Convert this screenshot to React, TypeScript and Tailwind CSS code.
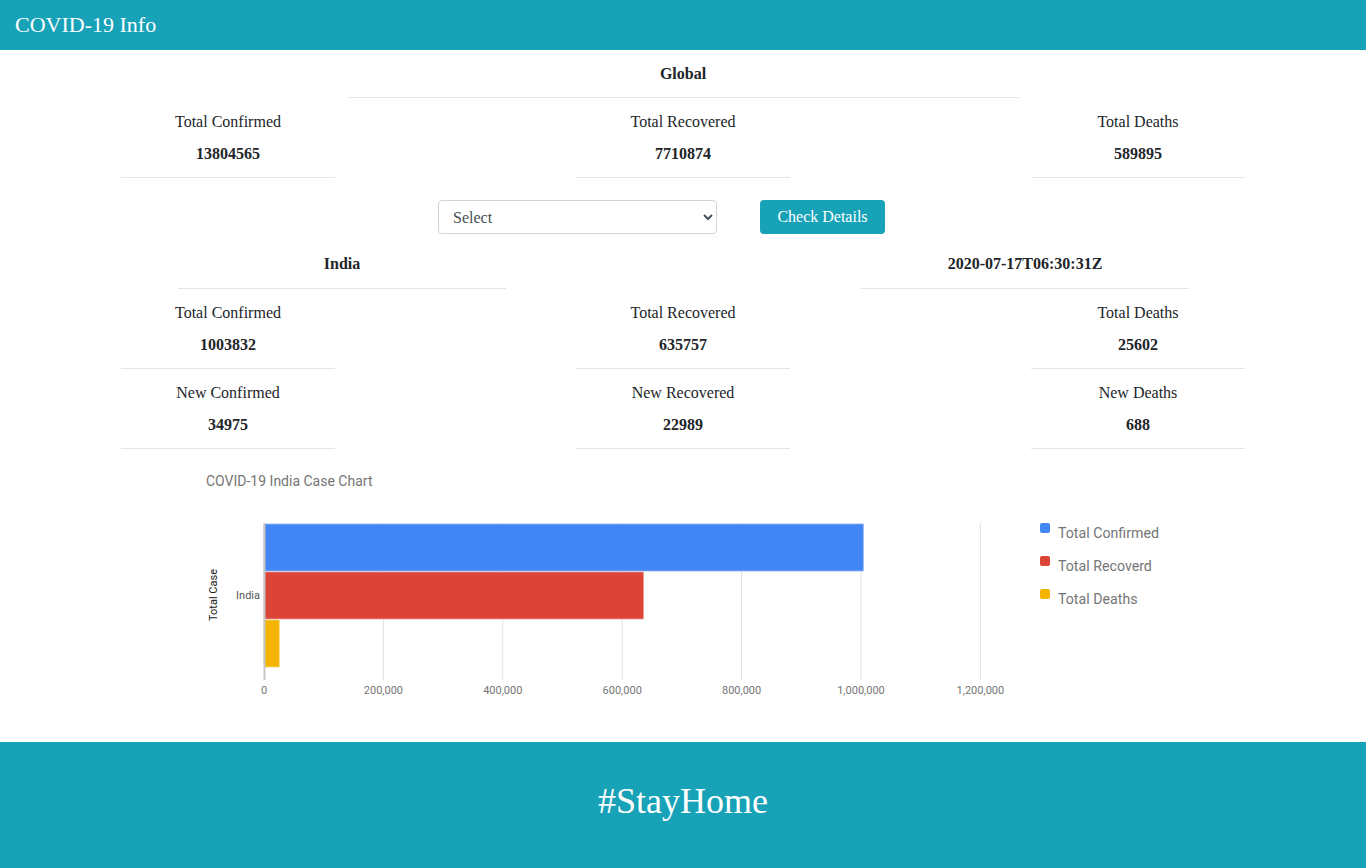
import React from 'react';

const serif = { fontFamily: '"Liberation Serif", "DejaVu Serif", serif' };

function Stat({ label, value }: { label: string; value: string }) {
  return (
    <div className="w-[214px] border-b border-[#e6e6e6] pt-[12px] pb-[11px] text-center">
      <p className="text-[16px] leading-6">{label}</p>
      <p className="mt-2 text-[16px] leading-6 font-bold">{value}</p>
    </div>
  );
}

function Chart() {
  const grid = [143, 262.4, 381.8, 501.2, 620.6, 740, 859.4];
  const labels = ['0', '200,000', '400,000', '600,000', '800,000', '1,000,000', '1,200,000'];
  const legend = [
    { name: 'Total Confirmed', color: '#4285f4', y: 63 },
    { name: 'Total Recoverd', color: '#db4437', y: 96 },
    { name: 'Total Deaths', color: '#f4b400', y: 129 },
  ];
  return (
    <svg width="1124" height="260" className="block" style={{ fontFamily: 'Roboto, Arial, sans-serif' }}>
      <text x="85" y="26" fontSize="14" fill="#757575">COVID-19 India Case Chart</text>
      {grid.slice(1).map(x => (
        <line key={x} x1={x} x2={x} y1="63" y2="220" stroke="#e0e0e0" strokeWidth="1" />
      ))}
      <rect x="143" y="64" width="599.3" height="47" fill="#4285f4" stroke="#8eb4f8" strokeWidth="0.8" />
      <rect x="143" y="112" width="379.5" height="47" fill="#db4437" stroke="#ec9e98" strokeWidth="0.8" />
      <rect x="143" y="160" width="15.3" height="47" fill="#f4b400" stroke="#f9d77d" strokeWidth="0.8" />
      <line x1="143.5" x2="143.5" y1="63" y2="220" stroke="#c6c6c6" strokeWidth="2" />
      {grid.map((x, i) => (
        <text key={i} x={x} y="234" fontSize="11" fill="#757575" textAnchor="middle">{labels[i]}</text>
      ))}
      <text x="139" y="139" fontSize="11" fill="#555" textAnchor="end">India</text>
      <text x="0" y="0" fontSize="11" fill="#222" textAnchor="middle" transform="translate(96 135) rotate(-90)">Total Case</text>
      {legend.map(l => (
        <g key={l.name}>
          <rect x="919" y={l.y} width="10" height="10" rx="2" fill={l.color} />
          <text x="937" y={l.y + 15} fontSize="14.2" fill="#757575">{l.name}</text>
        </g>
      ))}
    </svg>
  );
}

export default function App() {
  return (
    <div className="min-h-[868px] bg-white text-[#212529]" style={serif}>
      <div className="h-[50px] bg-[#17a2b8] px-[15px] pb-[2px] flex items-center">
        <span className="text-white text-[22px]">COVID-19 Info</span>
      </div>

      <div className="w-[1124px] ml-[121px]">
        {/* global */}
        <div className="flex justify-center">
          <div className="w-[671px] border-b border-[#e6e6e6] pt-[12px] pb-[11px] text-center">
            <p className="text-[16px] leading-6 font-bold">Global</p>
          </div>
        </div>
        <div className="flex justify-between">
          <Stat label="Total Confirmed" value="13804565" />
          <Stat label="Total Recovered" value="7710874" />
          <Stat label="Total Deaths" value="589895" />
        </div>

        <div className="flex items-center mt-[22px] ml-[317px] gap-[43px]">
          <select className="w-[279px] h-[34px] border border-[#ced4da] rounded-[4px] bg-white pl-[10px] pr-2 text-[16px] text-[#495057]" style={serif} defaultValue="">
            <option value="">Select</option>
            <option value="IN">India</option>
          </select>
          <button className="w-[125px] h-[34px] rounded-[4px] bg-[#17a2b8] text-white text-[16px]" style={serif}>
            Check Details
          </button>
        </div>

        {/* country */}
        <div className="flex mt-[17px]">
          <div className="w-[328px] ml-[57px] border-b border-[#e6e6e6] pt-[1px] pb-[12px] text-center">
            <p className="text-[16px] leading-6 font-bold">India</p>
          </div>
          <div className="w-[328px] ml-[355px] border-b border-[#e6e6e6] pt-[1px] pb-[12px] text-center">
            <p className="text-[16px] leading-6 font-bold">2020-07-17T06:30:31Z</p>
          </div>
        </div>
        <div className="flex justify-between">
          <Stat label="Total Confirmed" value="1003832" />
          <Stat label="Total Recovered" value="635757" />
          <Stat label="Total Deaths" value="25602" />
        </div>
        <div className="flex justify-between">
          <Stat label="New Confirmed" value="34975" />
          <Stat label="New Recovered" value="22989" />
          <Stat label="New Deaths" value="688" />
        </div>

        <div className="mt-[11px]">
          <Chart />
        </div>
      </div>

      <div className="mt-[22px] h-[126px] bg-[#17a2b8] pb-[8px] flex items-center justify-center">
        <span className="text-white text-[36px]">#StayHome</span>
      </div>
    </div>
  );
}
